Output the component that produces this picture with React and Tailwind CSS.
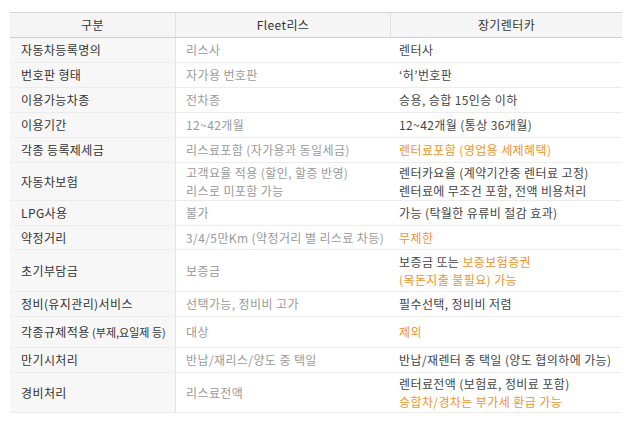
const rows = [
  { h: 'h-[25px]', label: '자동차등록명의', fleet: ['리스사'], rent: [[{ t: '렌터사' }]] },
  { h: 'h-[25px]', label: '번호판 형태', fleet: ['자가용 번호판'], rent: [[{ t: '‘허’번호판' }]] },
  { h: 'h-[25px]', label: '이용가능차종', fleet: ['전차종'], rent: [[{ t: '승용, 승합 15인승 이하' }]] },
  { h: 'h-[25px]', label: '이용기간', fleet: ['12~42개월'], rent: [[{ t: '12~42개월 (통상 36개월)' }]] },
  { h: 'h-[25px]', label: '각종 등록제세금', fleet: ['리스료포함 (자가용과 동일세금)'], rent: [[{ t: '렌터료포함 (영업용 세제혜택)', o: true }]] },
  {
    h: 'h-[38px]',
    label: '자동차보험',
    fleet: ['고객요율 적용 (할인, 할증 반영)', '리스로 미포함 가능'],
    rent: [[{ t: '렌터카요율 (계약기간중 렌터료 고정)' }], [{ t: '렌터료에 무조건 포함, 전액 비용처리' }]],
  },
  { h: 'h-[25px]', label: 'LPG사용', fleet: ['불가'], rent: [[{ t: '가능 (탁월한 유류비 절감 효과)' }]] },
  { h: 'h-[24px]', label: '약정거리', fleet: ['3/4/5만Km (약정거리 별 리스료 차등)'], rent: [[{ t: '무제한', o: true }]] },
  {
    h: 'h-[42px]',
    label: '초기부담금',
    fleet: ['보증금'],
    rent: [[{ t: '보증금 또는 ' }, { t: '보증보험증권', o: true }], [{ t: '(목돈지출 불필요) 가능', o: true }]],
  },
  { h: 'h-[25px]', label: '정비(유지관리)서비스', fleet: ['선택가능, 정비비 고가'], rent: [[{ t: '필수선택, 정비비 저렴' }]] },
  { h: 'h-[31px]', label: '각종규제적용', sub: ' (부제,요일제 등)', fleet: ['대상'], rent: [[{ t: '제외', o: true }]] },
  { h: 'h-[25px]', label: '만기시처리', fleet: ['반납/재리스/양도 중 택일'], rent: [[{ t: '반납/재렌터 중 택일 (양도 협의하에 가능)' }]] },
  {
    h: 'h-[40px]',
    label: '경비처리',
    fleet: ['리스료전액'],
    rent: [[{ t: '렌터료전액 (보험료, 정비료 포함)' }], [{ t: '승합차/경차는 부가세 환급 가능', o: true }]],
  },
];

const font = { fontFamily: '"Noto Sans CJK KR", "Noto Sans", sans-serif' };

export default function App() {
  return (
    <div className="w-[630px] h-[426px] bg-white pt-[12px] pl-[10px]" style={font}>
      <div className="w-[612px] border-t border-[#d4d4d4] text-[12px] leading-[18px] tracking-[0.4px]">
        {/* Header */}
        <div className="grid grid-cols-[166px_215px_231px] h-[25px] bg-[#f5f5f5] border-b border-[#cfcfcf] text-[#333]">
          <div className="flex items-center justify-center border-r border-[#e0e0e0]">구분</div>
          <div className="flex items-center justify-center border-r border-[#e0e0e0]">Fleet리스</div>
          <div className="flex items-center justify-center">장기렌터카</div>
        </div>

        {rows.map((r) => (
          <div
            key={r.label}
            className={`grid grid-cols-[166px_215px_231px] border-b border-[#ececec] ${r.h}`}
          >
            <div className="flex items-center bg-[#f7f7f7] border-r border-[#e2e2e2] pl-[11px] text-[#333]">
              <span>
                {r.label}
                {r.sub && <span className="text-[11px] tracking-normal">{r.sub}</span>}
              </span>
            </div>
            <div className="flex flex-col justify-center pl-[10px] text-[#999]">
              {r.fleet.map((line) => (
                <div key={line}>{line}</div>
              ))}
            </div>
            <div className="flex flex-col justify-center pl-[8px] text-[#444]">
              {r.rent.map((line, i) => (
                <div key={i}>
                  {line.map((seg, j) => (
                    <span key={j} className={seg.o ? 'text-[#f7921e]' : ''}>
                      {seg.t}
                    </span>
                  ))}
                </div>
              ))}
            </div>
          </div>
        ))}
      </div>
    </div>
  );
}
